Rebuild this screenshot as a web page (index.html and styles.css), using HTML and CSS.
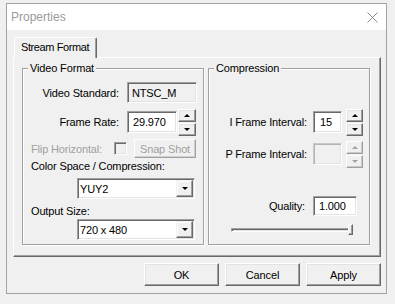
FILE: index.html
```html
<!DOCTYPE html>
<html lang="en">
<head>
    <meta charset="UTF-8">
    <meta name="viewport" content="width=device-width, initial-scale=1.0">
    <title>Properties</title>
    <link rel="stylesheet" href="styles.css">
</head>
<body>
    <div class="window">
        <div class="titlebar">
            <span class="title">Properties</span>
            <svg class="close" width="11" height="11" viewBox="0 0 11 11">
                <path d="M0.5 0.5 L10.5 10.5 M10.5 0.5 L0.5 10.5" stroke="#8a8a8a" stroke-width="1" fill="none"/>
            </svg>
        </div>
        <div class="client">
            <div class="tabs">
                <div class="tab">Stream Format</div>
            </div>
            <div class="panel">
                <div class="group video">
                    <span class="group-title">Video Format</span>

                    <div class="row std">
                        <span class="lbl">Video Standard:</span>
                        <div class="edit readonly std-edit">NTSC_M</div>
                    </div>

                    <div class="row fr">
                        <span class="lbl">Frame Rate:</span>
                        <div class="edit fr-edit">29.970</div>
                        <div class="spin">
                            <div class="spin-btn"><i class="arrow up"></i></div>
                            <div class="spin-btn"><i class="arrow down"></i></div>
                        </div>
                    </div>

                    <div class="row flip">
                        <span class="lbl disabled">Flip Horizontal:</span>
                        <span class="check"></span>
                        <div class="btn small disabled">Snap Shot</div>
                    </div>

                    <div class="caption cs">Color Space / Compression:</div>
                    <div class="combo first">
                        <span class="combo-text">YUY2</span>
                        <span class="drop"><i class="arrow down"></i></span>
                    </div>

                    <div class="caption out">Output Size:</div>
                    <div class="combo second">
                        <span class="combo-text">720 x 480</span>
                        <span class="drop"><i class="arrow down"></i></span>
                    </div>
                </div>

                <div class="group compression">
                    <span class="group-title">Compression</span>

                    <div class="row iframe">
                        <span class="lbl">I Frame Interval:</span>
                        <div class="edit int-edit">15</div>
                        <div class="spin">
                            <div class="spin-btn"><i class="arrow up"></i></div>
                            <div class="spin-btn"><i class="arrow down"></i></div>
                        </div>
                    </div>

                    <div class="row pframe">
                        <span class="lbl">P Frame Interval:</span>
                        <div class="edit int-edit readonly"></div>
                        <div class="spin off">
                            <div class="spin-btn"><i class="arrow up"></i></div>
                            <div class="spin-btn"><i class="arrow down"></i></div>
                        </div>
                    </div>

                    <div class="row quality">
                        <span class="lbl">Quality:</span>
                        <div class="edit q-edit">1.000</div>
                    </div>

                    <div class="slider">
                        <div class="track"></div>
                        <div class="thumb"></div>
                    </div>
                </div>
            </div>

            <div class="buttons">
                <div class="btn">OK</div>
                <div class="btn">Cancel</div>
                <div class="btn">Apply</div>
            </div>
        </div>
    </div>
</body>
</html>
```

FILE: styles.css
```css
/* General Styles */
* {
    box-sizing: border-box;
}
body {
    margin: 0;
    background-color: #f0f0f0;
    font-family: "Liberation Sans", Arial, sans-serif;
    font-size: 11px;
    letter-spacing: -0.15px;
    color: #000;
}

/* Window frame */
.window {
    margin: 3px 0 0 6px;
    width: 381px;
    height: 291px;
    border: 1px solid #a3a3a3;
    background-color: #f0f0f0;
}
.titlebar {
    height: 26px;
    background-color: #fff;
    display: flex;
    align-items: center;
    justify-content: space-between;
    padding: 0 8px 0 4px;
}
.title {
    font-size: 12px;
    letter-spacing: 0;
    color: #9a9a9a;
}
.client {
    padding: 7px 5px 0 6px;
}

/* Tab control */
.tabs {
    display: flex;
    height: 21px;
    margin-bottom: -1px;
    position: relative;
    z-index: 1;
}
.tab {
    margin-left: 1px;
    width: 83px;
    height: 21px;
    background-color: #f0f0f0;
    border-top: 1px solid #fff;
    border-left: 1px solid #fff;
    border-right: 1px solid #696969;
    box-shadow: inset -1px 0 #a0a0a0;
    border-radius: 2px 2px 0 0;
    padding: 0 0 2px 6px;
    display: flex;
    align-items: center;
    letter-spacing: -0.4px;
    white-space: nowrap;
}
.panel {
    width: 368px;
    height: 200px;
    border-top: 1px solid #fff;
    border-left: 1px solid #fff;
    border-right: 1px solid #696969;
    border-bottom: 1px solid #696969;
    box-shadow: inset -1px -1px #a0a0a0;
    padding: 10px 0 0 8px;
    display: flex;
    gap: 4px;
}

/* Group boxes */
.group {
    position: relative;
    height: 177px;
    border: 1px solid #a0a0a0;
    box-shadow: inset 1px 1px #fff, 1px 1px #fff;
}
.video {
    width: 182px;
}
.compression {
    width: 162px;
}
.group-title {
    position: absolute;
    top: -7px;
    left: 5px;
    padding: 0 2px;
    line-height: 13px;
    background-color: #f0f0f0;
}

.row {
    display: flex;
    align-items: center;
}
.lbl {
    white-space: nowrap;
}
.disabled {
    color: #a0a0a0;
}

/* Video format rows */
.std {
    margin-top: 13px;
    height: 21px;
}
.std .lbl,
.fr .lbl {
    width: 96px;
    text-align: right;
    margin-right: 8px;
}
.fr {
    margin-top: 6px;
    height: 26px;
}
.flip {
    margin-top: 4px;
    height: 19px;
    padding-left: 8px;
}
.flip .lbl {
    width: 83px;
}
.caption {
    padding-left: 8px;
    line-height: 13px;
    height: 13px;
}
.cs {
    margin-top: 2px;
}
.out {
    margin-top: 6px;
}
.combo.first {
    margin-top: 5px;
}
.combo.second {
    margin-top: 1px;
}

/* Compression rows */
.iframe {
    margin-top: 40px;
    height: 26px;
}
.pframe {
    margin-top: 6px;
    height: 26px;
}
.iframe .lbl,
.pframe .lbl {
    width: 98px;
    text-align: right;
    margin-right: 6px;
}
.quality {
    margin-top: 29px;
    height: 20px;
}
.quality .lbl {
    width: 96px;
    text-align: right;
    margin-right: 8px;
}

/* Edit boxes */
.edit {
    height: 22px;
    border: 1px solid;
    border-color: #a0a0a0 #fff #fff #a0a0a0;
    box-shadow: inset 1px 1px #696969, inset -1px -1px #e3e3e3;
    background-color: #fff;
    display: flex;
    align-items: center;
    padding-left: 5px;
}
.edit.readonly {
    background-color: #f0f0f0;
}
.std-edit {
    width: 70px;
    height: 21px;
    padding-left: 4px;
}
.fr-edit {
    width: 50px;
    margin-right: 1px;
}
.int-edit {
    width: 29px;
    margin-right: 4px;
    padding-left: 6px;
}
.pframe .edit {
    border-color: #c8c8c8 #fff #fff #c8c8c8;
    box-shadow: inset 1px 1px #b4b4b4, inset -1px -1px #e3e3e3;
}
.q-edit {
    width: 44px;
    height: 20px;
}

/* Spin buttons */
.spin {
    display: flex;
    flex-direction: column;
    gap: 1px;
    width: 17px;
}
.fr .spin {
    width: 18px;
}
.spin-btn {
    height: 13px;
    border: 1px solid;
    border-color: #fff #696969 #696969 #fff;
    box-shadow: inset -1px -1px #a0a0a0, inset 1px 1px #e3e3e3;
    background-color: #f0f0f0;
    display: flex;
    align-items: center;
    justify-content: center;
}
.spin.off .spin-btn {
    border-color: #fff #a0a0a0 #a0a0a0 #fff;
    box-shadow: inset -1px -1px #c8c8c8;
}
.arrow {
    display: block;
    width: 1px;
    height: 0;
    border-left: 3px solid transparent;
    border-right: 3px solid transparent;
}
.arrow.up {
    border-bottom: 3px solid #000;
}
.arrow.down {
    border-top: 3px solid #000;
}
.spin.off .arrow.up {
    border-bottom-color: #a0a0a0;
}
.spin.off .arrow.down {
    border-top-color: #a0a0a0;
}

/* Check box */
.check {
    width: 13px;
    height: 13px;
    margin-right: 7px;
    border: 1px solid;
    border-color: #a0a0a0 #fff #fff #a0a0a0;
    box-shadow: inset 1px 1px #696969, inset -1px -1px #e3e3e3;
    background-color: #f0f0f0;
}

/* Push buttons */
.btn {
    width: 75px;
    height: 23px;
    border: 1px solid;
    border-color: #fff #696969 #696969 #fff;
    box-shadow: inset -1px -1px #a0a0a0, inset 1px 1px #e3e3e3;
    background-color: #f0f0f0;
    display: flex;
    align-items: center;
    justify-content: center;
}
.btn.small {
    width: 62px;
    height: 19px;
}
.btn.disabled {
    border-color: #fff #a0a0a0 #a0a0a0 #fff;
    box-shadow: inset -1px -1px #d0d0d0;
}
.buttons {
    margin-top: 6px;
    display: flex;
    justify-content: flex-end;
    gap: 6px;
}

/* Combo boxes */
.combo {
    margin-left: 54px;
    width: 118px;
    height: 21px;
    border: 1px solid;
    border-color: #a0a0a0 #fff #fff #a0a0a0;
    box-shadow: inset 1px 1px #696969, inset -1px -1px #e3e3e3;
    background-color: #fff;
    padding: 1px;
    display: flex;
    align-items: center;
}
.combo-text {
    flex: 1;
    padding-left: 1px;
}
.drop {
    width: 17px;
    height: 17px;
    border: 1px solid;
    border-color: #f0f0f0 #696969 #696969 #f0f0f0;
    box-shadow: inset -1px -1px #a0a0a0, inset 1px 1px #fff;
    background-color: #f0f0f0;
    display: flex;
    align-items: center;
    justify-content: center;
}

/* Track bar */
.slider {
    position: relative;
    margin: 8px 0 0 22px;
    width: 122px;
    height: 11px;
}
.track {
    position: absolute;
    left: 0;
    right: 0;
    top: 4px;
    height: 4px;
    border: 1px solid;
    border-color: #a0a0a0 #fff #fff #a0a0a0;
    box-shadow: inset 1px 1px #696969;
    background-color: #e3e3e3;
}
.thumb {
    position: absolute;
    right: 0;
    top: 0;
    width: 5px;
    height: 11px;
    border: 1px solid;
    border-color: #fff #696969 #696969 #fff;
    box-shadow: inset -1px -1px #a0a0a0;
    background-color: #f0f0f0;
}
```
